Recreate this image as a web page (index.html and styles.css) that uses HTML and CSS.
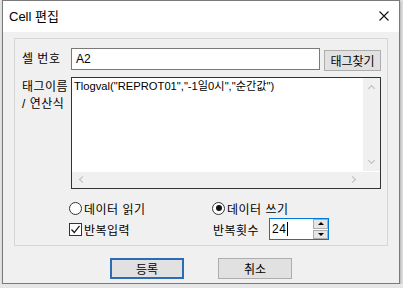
FILE: index.html
```html
<!DOCTYPE html>
<html lang="ko">
<head>
    <meta charset="UTF-8">
    <title>Cell 편집</title>
    <link rel="stylesheet" href="styles.css">
</head>
<body>
    <div class="dialog">
        <div class="titlebar">
            <span class="title">Cell 편집</span>
            <svg class="close" width="10" height="10" viewBox="0 0 10 10">
                <path d="M0.5 0.5 L9.5 9.5 M9.5 0.5 L0.5 9.5" stroke="#111" stroke-width="1.1" fill="none"/>
            </svg>
        </div>
        <div class="body">
            <div class="group">
                <div class="label">셀 번호</div>
                <div class="cell-row">
                    <div class="input">A2</div>
                    <div class="btn small">태그찾기</div>
                </div>

                <div class="label two">태그이름<br>/ 연산식</div>
                <div class="textarea">
                    <div class="text">Tlogval("REPROT01","-1일0시","순간값")</div>
                    <div class="vscroll">
                        <span class="arrow up"></span>
                        <span class="arrow down"></span>
                    </div>
                    <div class="hscroll">
                        <span class="arrow left"></span>
                        <span class="arrow right"></span>
                    </div>
                    <div class="corner"></div>
                </div>

                <div class="options">
                    <label class="opt"><span class="radio"></span>데이터 읽기</label>
                    <label class="opt"><span class="radio on"></span>데이터 쓰기</label>
                    <label class="opt"><span class="check">
                        <svg width="11" height="11" viewBox="0 0 11 11"><path d="M1.5 5.5 L4.3 8.5 L9.5 1.8" stroke="#111" stroke-width="1.2" fill="none"/></svg>
                    </span>반복입력</label>
                    <div class="opt">
                        <span class="count-label">반복횟수</span>
                        <div class="spin">
                            <span class="value">24</span><span class="caret"></span>
                            <div class="spin-btns">
                                <span class="spin-btn"><i class="tri up"></i></span>
                                <span class="spin-btn"><i class="tri down"></i></span>
                            </div>
                        </div>
                    </div>
                </div>
            </div>
            <div class="buttons">
                <div class="btn default">등록</div>
                <div class="btn">취소</div>
            </div>
        </div>
    </div>
</body>
</html>
```

FILE: styles.css
```css
/* Finestra di dialogo stile Windows */
body {
    margin: 0;
    padding: 0;
    background: #e6e6e6;
    font-family: "Liberation Sans", "Noto Sans CJK KR", sans-serif;
    font-size: 12px;
    color: #000;
}

.dialog {
    margin-left: 2px;
    width: 398px;
    height: 284px;
    box-sizing: border-box;
    border: 1px solid #7a7a7a;
    background: #f0f0f0;
    display: flex;
    flex-direction: column;
    box-shadow: 1px 1px 3px rgba(0, 0, 0, 0.25);
}

.titlebar {
    height: 29px;
    background: #fff;
    display: flex;
    align-items: center;
    justify-content: space-between;
    padding: 0 10px 2px 6px;
    font-size: 13px;
}

.body {
    flex: 1;
    padding: 6px 11px 0 11px;
    display: flex;
    flex-direction: column;
}

.group {
    border: 1px solid #d6d6d6;
    padding: 9px 6px 5px 7px;
    display: grid;
    grid-template-columns: 49px 1fr;
    row-gap: 7px;
}

.label {
    line-height: 22px;
    letter-spacing: 0.5px;
}

.label.two {
    line-height: 17px;
    padding-top: 2px;
}

.cell-row {
    display: flex;
    gap: 4px;
    height: 22px;
}

.input {
    flex: 1;
    background: #fff;
    border: 1px solid #7a7a7a;
    padding-left: 4px;
    line-height: 20px;
}

.btn {
    background: #e1e1e1;
    border: 1px solid #adadad;
    display: flex;
    align-items: center;
    justify-content: center;
    box-sizing: border-box;
}

.btn.small {
    width: 57px;
    height: 21px;
    margin-top: 2px;
}

.textarea {
    position: relative;
    height: 112px;
    background: #fff;
    border: 1px solid #333;
    box-sizing: border-box;
}

.textarea .text {
    padding: 1px 0 0 2px;
    line-height: 15px;
    font-size: 11.2px;
}

.vscroll {
    position: absolute;
    right: 0;
    top: 0;
    width: 17px;
    bottom: 17px;
    background: #f0f0f0;
}

.hscroll {
    position: absolute;
    left: 0;
    right: 17px;
    bottom: 0;
    height: 16px;
    background: #f0f0f0;
}

.corner {
    position: absolute;
    right: 0;
    bottom: 0;
    width: 17px;
    height: 16px;
    background: #f0f0f0;
}

.arrow {
    position: absolute;
    width: 4px;
    height: 4px;
    border-left: 1px solid #bcbcbc;
    border-top: 1px solid #bcbcbc;
}

.arrow.up { left: 6px; top: 8px; transform: rotate(45deg); }
.arrow.down { left: 6px; bottom: 8px; transform: rotate(225deg); }
.arrow.left { left: 8px; top: 5px; transform: rotate(-45deg); }
.arrow.right { right: 8px; top: 5px; transform: rotate(135deg); }

.options {
    grid-column: 2;
    margin-left: -2px;
    margin-top: 4px;
    display: grid;
    grid-template-columns: 143px auto;
    grid-template-rows: 16px 22px;
    row-gap: 2px;
}

.opt {
    display: flex;
    align-items: center;
    gap: 2px;
    letter-spacing: 0.5px;
}

.radio {
    width: 11px;
    height: 11px;
    border: 1px solid #333;
    border-radius: 50%;
    background: #fff;
    position: relative;
}

.radio.on::after {
    content: "";
    position: absolute;
    left: 2.5px;
    top: 2.5px;
    width: 6px;
    height: 6px;
    border-radius: 50%;
    background: #111;
}

.check {
    width: 11px;
    height: 11px;
    border: 1px solid #333;
    background: #fff;
    display: flex;
}

.count-label {
    margin-left: 1px;
    width: 54px;
}

.spin {
    position: relative;
    width: 60px;
    height: 22px;
    box-sizing: border-box;
    border: 1px solid #0078d7;
    background: #fff;
    display: flex;
    align-items: center;
    padding-left: 2px;
}

.caret {
    width: 1px;
    height: 14px;
    background: #000;
    margin-left: 1px;
}

.spin-btns {
    position: absolute;
    right: 0;
    top: 0;
    width: 15px;
    bottom: 0;
    display: flex;
    flex-direction: column;
    gap: 1px;
}

.spin-btn {
    flex: 1;
    background: #e5e5e5;
    border: 1px solid #adadad;
    display: flex;
    align-items: center;
    justify-content: center;
}

.tri {
    width: 0;
    height: 0;
    border-left: 3px solid transparent;
    border-right: 3px solid transparent;
}

.tri.up { border-bottom: 3px solid #000; }
.tri.down { border-top: 3px solid #000; }

.buttons {
    display: flex;
    justify-content: center;
    gap: 34px;
    margin-top: 12px;
}

.buttons .btn {
    width: 74px;
    height: 21px;
}

.btn.default {
    border: 2px solid #2b6cb3;
}
```
